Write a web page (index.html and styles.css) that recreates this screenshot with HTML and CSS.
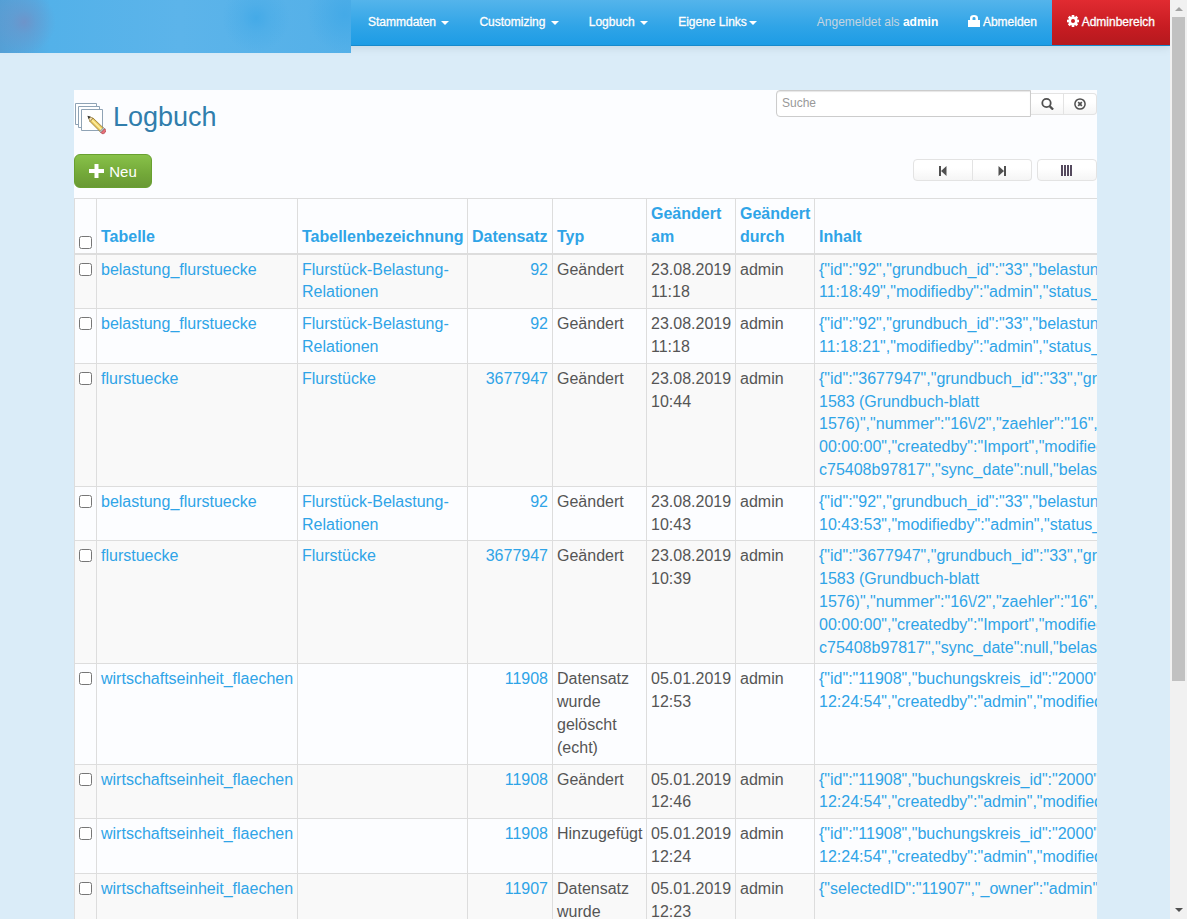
FILE: index.html
```html
<!DOCTYPE html>
<html lang="de">
<head>
  <meta charset="UTF-8" />
  <title>Logbuch</title>
  <link rel="stylesheet" href="styles.css">
</head>
<body>
  <div class="page">
    <header class="navbar">
      <a class="brand" href="#" aria-label="Startseite"></a>
      <nav class="menu">
        <a href="#">Stammdaten <span class="caret spaced"></span></a>
        <a href="#">Customizing <span class="caret spaced"></span></a>
        <a href="#">Logbuch <span class="caret spaced"></span></a>
        <a href="#">Eigene Links<span class="caret"></span></a>
      </nav>
      <div class="user">
        <span class="login">Angemeldet als <b>admin</b></span>
        <a class="logout" href="#">
          <svg width="12" height="12" viewBox="0 0 12 12"><path fill="#fff" d="M0 5h2V3Q2 0 6 0t4 3v2h2v7H0zM4.500 5h3V3.200Q7.500 2 6 2T4.500 3.200z"/></svg>
          Abmelden</a>
        <a class="admin" href="#">
          <svg width="12" height="12" viewBox="0 0 12 12"><g fill="#fff"><path d="M4.700 0h2.600v12H4.700z"/><path d="M4.700 0h2.600v12H4.700z" transform="rotate(45 6 6)"/><path d="M4.700 0h2.600v12H4.700z" transform="rotate(90 6 6)"/><path d="M4.700 0h2.600v12H4.700z" transform="rotate(135 6 6)"/><circle cx="6" cy="6" r="4.600"/></g><circle cx="6" cy="6" r="2" fill="#cb2026"/></svg>
          Adminbereich</a>
      </div>
    </header>

    <main class="content">
      <div class="head">
        <h1>
          <svg width="32" height="33" viewBox="0 0 32 33">
            <g fill="#fff" stroke="#8fa3b5"><path d="M1.500 1.500h21v21h-21z"/><path d="M4.500 4.500h21v21h-21z"/><path d="M7.500 7.500h21v21h-21z"/></g>
            <path d="M19 16L31 27.500 27.500 31 16 19.500z" fill="#e9c860" stroke="#8f7530" stroke-width=".8"/>
            <path d="M18 18l11 11" stroke="#fff0a0" stroke-width="1.500"/>
            <path d="M14 14.500l5 1.500-3 3.500z" fill="#f3dfb4" stroke="#8f7530" stroke-width=".7"/>
            <path d="M13.500 13.800l3.300 1-2.200 2.200z" fill="#333"/>
            <path d="M25.700 29.500l3.800-4 1.200 1.200-3.700 4z" fill="#b9c4cc" stroke="#7d8a94" stroke-width=".6"/>
            <path d="M27 30.700l3.700-4q1.800 1.500.6 3.500t-3.300 1.500z" fill="#e8707a" stroke="#b0454e" stroke-width=".7"/>
          </svg>
          Logbuch
        </h1>
        <form class="search">
          <input type="text" placeholder="Suche" aria-label="Suche">
          <button type="button" class="btn" aria-label="Suchen">
            <svg width="13" height="13" viewBox="0 0 13 13" fill="none" stroke="#505050"><circle cx="5.500" cy="6" r="4.200" stroke-width="1.800"/><path d="M8.600 9.100l3.500 3.500" stroke-width="2.200"/></svg>
          </button>
          <button type="button" class="btn" aria-label="Zurücksetzen">
            <svg width="13" height="13" viewBox="0 0 13 13" fill="none" stroke="#505050"><circle cx="6" cy="7" r="5.100" stroke-width="1.500"/><path d="M4.200 5.200l3.600 3.600M7.800 5.200L4.200 8.800" stroke-width="1.700"/></svg>
          </button>
        </form>
      </div>

      <div class="toolbar">
        <button type="button" class="btn-new">
          <svg width="15" height="15" viewBox="0 0 15 15"><path fill="#fff" d="M5.500 0h4v5H15v4H9.500v5h-4V9H0V5h5.500z"/></svg>
          Neu
        </button>
        <div class="group">
          <button type="button" class="btn" aria-label="Erste Seite"><svg width="10" height="12" viewBox="0 0 10 12"><path fill="#505050" d="M1 2h2v10H1zM8.500 2v10L3 7z"/></svg></button>
          <button type="button" class="btn" aria-label="Letzte Seite"><svg width="10" height="12" viewBox="0 0 10 12"><path fill="#505050" d="M7 2h2v10H7zM1.500 2v10L7 7z"/></svg></button>
        </div>
        <button type="button" class="btn columns" aria-label="Spalten"><svg width="12" height="12" viewBox="0 0 12 12"><path fill="#554a5e" d="M0 1h2v11H0zM3 1h2v11H3zM6 1h2v11H6zM9 1h2v11H9z"/></svg></button>
      </div>

      <table>
        <colgroup>
          <col class="c-check"><col class="c-table"><col class="c-label"><col class="c-record"><col class="c-type"><col class="c-date"><col class="c-user"><col>
        </colgroup>
        <thead>
          <tr>
            <th><input type="checkbox" aria-label="Alle auswählen"></th>
            <th><a href="#">Tabelle</a></th>
            <th><a href="#">Tabellenbezeichnung</a></th>
            <th><a href="#">Datensatz</a></th>
            <th><a href="#">Typ</a></th>
            <th><a href="#">Geändert am</a></th>
            <th><a href="#">Geändert durch</a></th>
            <th><a href="#">Inhalt</a></th>
          </tr>
        </thead>
        <tbody>
          <tr>
            <td><input type="checkbox" aria-label="Auswählen"></td>
            <td><a href="#">belastung_flurstuecke</a></td>
            <td><a href="#">Flurstück-Belastung-Relationen</a></td>
            <td class="num"><a href="#">92</a></td>
            <td>Geändert</td>
            <td>23.08.2019 11:18</td>
            <td>admin</td>
            <td class="json"><a href="#">{"id":"92","grundbuch_id":"33","belastung_id"<br>11:18:49","modifiedby":"admin","status_id"</a></td>
          </tr>
          <tr>
            <td><input type="checkbox" aria-label="Auswählen"></td>
            <td><a href="#">belastung_flurstuecke</a></td>
            <td><a href="#">Flurstück-Belastung-Relationen</a></td>
            <td class="num"><a href="#">92</a></td>
            <td>Geändert</td>
            <td>23.08.2019 11:18</td>
            <td>admin</td>
            <td class="json"><a href="#">{"id":"92","grundbuch_id":"33","belastung_id"<br>11:18:21","modifiedby":"admin","status_id"</a></td>
          </tr>
          <tr>
            <td><input type="checkbox" aria-label="Auswählen"></td>
            <td><a href="#">flurstuecke</a></td>
            <td><a href="#">Flurstücke</a></td>
            <td class="num"><a href="#">3677947</a></td>
            <td>Geändert</td>
            <td>23.08.2019 10:44</td>
            <td>admin</td>
            <td class="json"><a href="#">{"id":"3677947","grundbuch_id":"33","grundbuch"<br>1583 (Grundbuch-blatt<br>1576)","nummer":"16\/2","zaehler":"16",<br>00:00:00","createdby":"Import","modified"<br>c75408b97817","sync_date":null,"belastung"</a></td>
          </tr>
          <tr>
            <td><input type="checkbox" aria-label="Auswählen"></td>
            <td><a href="#">belastung_flurstuecke</a></td>
            <td><a href="#">Flurstück-Belastung-Relationen</a></td>
            <td class="num"><a href="#">92</a></td>
            <td>Geändert</td>
            <td>23.08.2019 10:43</td>
            <td>admin</td>
            <td class="json"><a href="#">{"id":"92","grundbuch_id":"33","belastung_id"<br>10:43:53","modifiedby":"admin","status_id"</a></td>
          </tr>
          <tr>
            <td><input type="checkbox" aria-label="Auswählen"></td>
            <td><a href="#">flurstuecke</a></td>
            <td><a href="#">Flurstücke</a></td>
            <td class="num"><a href="#">3677947</a></td>
            <td>Geändert</td>
            <td>23.08.2019 10:39</td>
            <td>admin</td>
            <td class="json"><a href="#">{"id":"3677947","grundbuch_id":"33","grundbuch"<br>1583 (Grundbuch-blatt<br>1576)","nummer":"16\/2","zaehler":"16",<br>00:00:00","createdby":"Import","modified"<br>c75408b97817","sync_date":null,"belastung"</a></td>
          </tr>
          <tr>
            <td><input type="checkbox" aria-label="Auswählen"></td>
            <td><a href="#">wirtschaftseinheit_flaechen</a></td>
            <td></td>
            <td class="num"><a href="#">11908</a></td>
            <td>Datensatz wurde gelöscht (echt)</td>
            <td>05.01.2019 12:53</td>
            <td>admin</td>
            <td class="json"><a href="#">{"id":"11908","buchungskreis_id":"2000",<br>12:24:54","createdby":"admin","modified"</a></td>
          </tr>
          <tr>
            <td><input type="checkbox" aria-label="Auswählen"></td>
            <td><a href="#">wirtschaftseinheit_flaechen</a></td>
            <td></td>
            <td class="num"><a href="#">11908</a></td>
            <td>Geändert</td>
            <td>05.01.2019 12:46</td>
            <td>admin</td>
            <td class="json"><a href="#">{"id":"11908","buchungskreis_id":"2000",<br>12:24:54","createdby":"admin","modified"</a></td>
          </tr>
          <tr>
            <td><input type="checkbox" aria-label="Auswählen"></td>
            <td><a href="#">wirtschaftseinheit_flaechen</a></td>
            <td></td>
            <td class="num"><a href="#">11908</a></td>
            <td>Hinzugefügt</td>
            <td>05.01.2019 12:24</td>
            <td>admin</td>
            <td class="json"><a href="#">{"id":"11908","buchungskreis_id":"2000",<br>12:24:54","createdby":"admin","modified"</a></td>
          </tr>
          <tr>
            <td><input type="checkbox" aria-label="Auswählen"></td>
            <td><a href="#">wirtschaftseinheit_flaechen</a></td>
            <td></td>
            <td class="num"><a href="#">11907</a></td>
            <td>Datensatz wurde</td>
            <td>05.01.2019 12:23</td>
            <td>admin</td>
            <td class="json"><a href="#">{"selectedID":"11907","_owner":"admin"}</a></td>
          </tr>
        </tbody>
      </table>
    </main>
  </div>

  <div class="scrollbar">
    <span class="arrow up"></span>
    <div class="track"><div class="thumb"></div></div>
    <span class="arrow down"></span>
  </div>
</body>
</html>
```
FILE: styles.css
```css
* {
  box-sizing: border-box;
}

body {
  display: flex;
  height: 100vh;
  margin: 0;
  overflow: hidden;
  font-family: Arial, "Liberation Sans", sans-serif;
  font-size: 16px;
  line-height: 1.425;
  color: #555;
  background: #daecf8;
}

a {
  color: #2fa4e7;
  text-decoration: none;
}

button, input {
  font-family: inherit;
}

.page {
  flex: 1;
  min-width: 0;
  overflow: hidden;
}

/* navigation */
.navbar {
  display: flex;
  height: 46px;
  font-size: 12px;
  line-height: 44px;
  background: linear-gradient(#54b4eb, #2fa4e7 60%, #1d9ce5);
  border-bottom: 1px solid #178acc;
  box-shadow: 0 1px 10px rgba(0,0,0,0.1);
}

.navbar a {
  color: #fff;
  text-shadow: 0 1px 0 rgba(0,0,0,0.1);
  -webkit-text-stroke: 0.3px #fff;
}

.brand {
  flex: none;
  width: 351px;
  height: 53px;
  background:
    radial-gradient(circle at 24px 22px, rgba(112,146,200,0.9), rgba(108,149,202,0.5) 12px, rgba(108,149,202,0) 32px),
    radial-gradient(circle at 256px 18px, rgba(66,169,231,0.9), rgba(66,169,231,0.4) 14px, rgba(66,169,231,0) 34px),
    radial-gradient(circle at 345px 15px, rgba(66,169,231,0.9), rgba(66,169,231,0) 38px),
    linear-gradient(90deg, #559fd5, #53b1e9 50px, #5cb4ea 180px, #54b0e8);
}

.menu {
  display: flex;
  gap: 30px;
  padding-left: 17px;
}

.caret {
  display: inline-block;
  vertical-align: middle;
  border: 4px solid transparent;
  border-top-color: #fff;
  border-bottom: 0;
}

.caret.spaced {
  margin-left: 2px;
}

.menu a:last-child .caret {
  margin-left: 2px;
}

.user {
  display: flex;
  margin-left: auto;
}

.login {
  color: #c5d5e0;
}

.login b {
  color: #fff;
}

.user svg {
  vertical-align: -1px;
}

.logout {
  padding: 0 15px 0 30px;
}

.admin {
  height: 45px;
  padding: 0 15px;
  background: linear-gradient(#e12b31, #c71c22 60%, #b5191e);
}

/* content */
.content {
  margin: 44px 73px 0 74px;
  overflow: hidden;
  background: #fcfdff;
}

.head {
  display: flex;
  justify-content: space-between;
  align-items: flex-start;
  height: 64px;
}

h1 {
  display: flex;
  align-items: flex-start;
  gap: 7px;
  margin: 12px 0 0;
  font-size: 27px;
  line-height: 30px;
  font-weight: normal;
  color: #317eac;
}

.search {
  display: flex;
  align-items: center;
}

.search input {
  width: 255px;
  height: 27px;
  padding: 0 5px 2px;
  font-size: 12px;
  color: #555;
  background: #fff;
  border: 1px solid #ccc;
  border-radius: 4px 0 0 4px;
  box-shadow: inset 0 1px 1px rgba(0,0,0,0.1);
}

.search input::placeholder {
  color: #999;
}

.btn {
  display: flex;
  align-items: center;
  justify-content: center;
  width: 60px;
  height: 22px;
  padding: 0;
  background: linear-gradient(#fff 40%, #f5f5f5);
  border: 1px solid #e3e3e3;
  border-radius: 4px;
}

.search .btn {
  width: 33px;
  border-left: 0;
  border-radius: 0;
}

.search .btn:last-child {
  border-radius: 0 4px 4px 0;
}

.toolbar {
  display: flex;
  align-items: flex-start;
  height: 44px;
}

.btn-new {
  display: flex;
  align-items: center;
  justify-content: center;
  gap: 5px;
  width: 78px;
  height: 34px;
  padding: 0;
  font-size: 15px;
  color: #fff;
  background: linear-gradient(#88c149, #73a839 60%, #699934);
  border: 1px solid #68a030;
  border-radius: 6px;
}

.group {
  display: flex;
  margin: 5px 5px 0 auto;
}

.group .btn:first-child {
  border-radius: 4px 0 0 4px;
}

.group .btn:last-child {
  width: 59px;
  border-left: 0;
  border-radius: 0 4px 4px 0;
}

.columns {
  margin-top: 5px;
}

/* table */
table {
  width: 100%;
  table-layout: fixed;
  border-collapse: collapse;
}

.c-check { width: 22px; }
.c-table { width: 201px; }
.c-label { width: 170px; }
.c-record { width: 85px; }
.c-type { width: 94px; }
.c-date { width: 89px; }
.c-user { width: 79px; }

th, td {
  padding: 4px 0 4px 4px;
  border: 1px solid #ddd;
  text-align: left;
  vertical-align: top;
}

th {
  vertical-align: bottom;
  border-bottom-width: 2px;
}

th:last-child, td:last-child {
  border-right: 0;
}

tbody tr:nth-child(odd) {
  background: #f9f9f9;
}

.num {
  padding-right: 4px;
  text-align: right;
}

.json {
  white-space: nowrap;
}

input[type="checkbox"] {
  display: block;
  width: 13px;
  height: 13px;
  margin: 4px 0 0;
}

th input[type="checkbox"] {
  margin: 0;
}

/* window scrollbar */
.scrollbar {
  display: flex;
  flex-direction: column;
  align-items: center;
  justify-content: space-between;
  width: 17px;
  padding: 7px 0;
  background: #f1f1f1;
}

.track {
  flex: 1;
  width: 13px;
  margin: 6px 0;
}

.thumb {
  height: 75%;
  background: #c1c1c1;
}

.arrow {
  border: 4px solid transparent;
}

.arrow.up {
  border-top: 0;
  border-bottom-color: #a3a3a3;
}

.arrow.down {
  border-bottom: 0;
  border-top-color: #505050;
}
```
